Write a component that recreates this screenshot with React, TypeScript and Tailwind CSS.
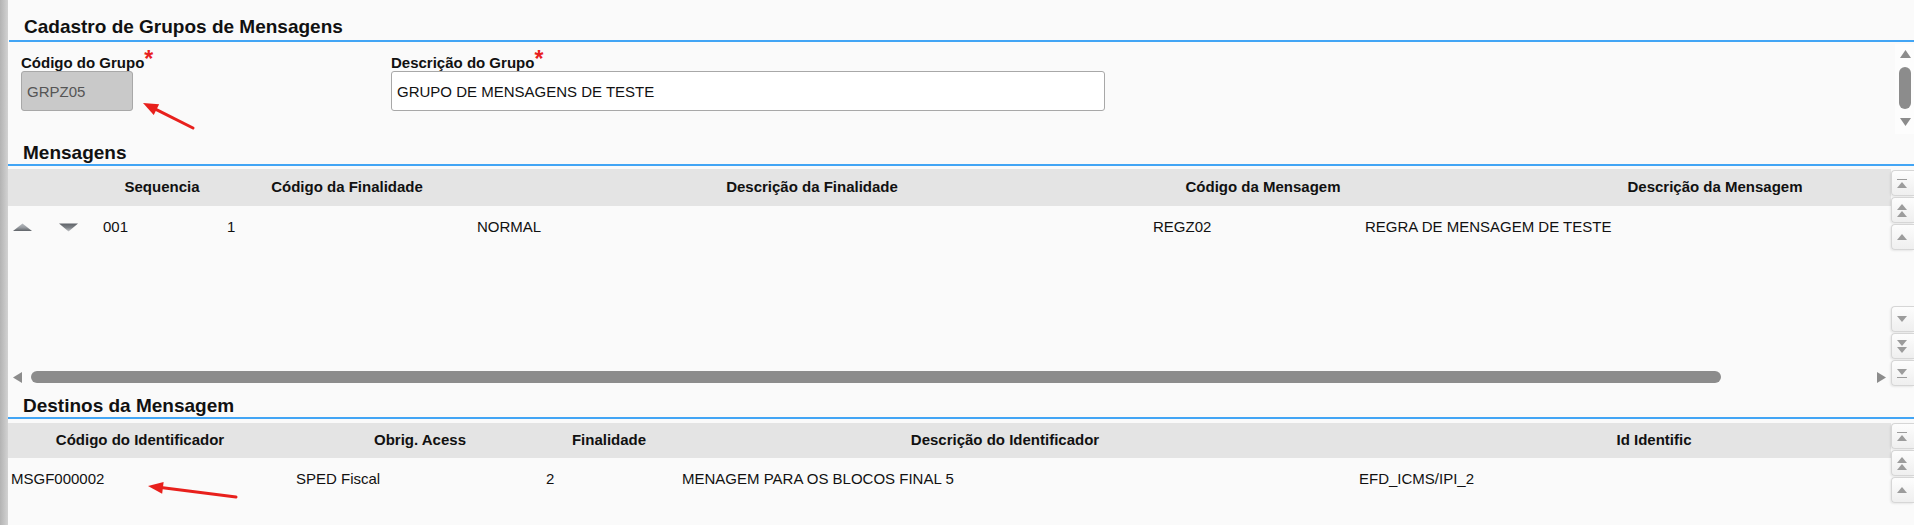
import React from 'react';

type Cell = { text: string };

const mensagensHeader = [
  'Sequencia',
  'Código da Finalidade',
  'Descrição da Finalidade',
  'Código da Mensagem',
  'Descrição da Mensagem',
];

const destinosHeader = [
  'Código do Identificador',
  'Obrig. Acess',
  'Finalidade',
  'Descrição do Identificador',
  'Id Identific',
];

const destinosRow: Cell[] = [
  { text: 'MSGF000002' },
  { text: 'SPED Fiscal' },
  { text: '2' },
  { text: 'MENAGEM PARA OS BLOCOS FINAL 5' },
  { text: 'EFD_ICMS/IPI_2' },
];

// small triangle used by the scroll controls
const Tri = ({ dir, w = 10, h = 7, color = '#9a9a9a' }: { dir: 'up' | 'down' | 'left' | 'right'; w?: number; h?: number; color?: string }) => {
  const pts =
    dir === 'up'
      ? `${w / 2},0 ${w},${h} 0,${h}`
      : dir === 'down'
      ? `0,0 ${w},0 ${w / 2},${h}`
      : dir === 'left'
      ? `${w},0 ${w},${h} 0,${h / 2}`
      : `0,0 ${w},${h / 2} 0,${h}`;
  return (
    <svg width={w} height={h} viewBox={`0 0 ${w} ${h}`} className="block">
      <polygon points={pts} fill={color} />
    </svg>
  );
};

type BtnKind = 'first' | 'prevPage' | 'prev' | 'next' | 'nextPage' | 'last';

const ScrollButton = ({ kind }: { kind: BtnKind }) => {
  let icon: React.ReactNode = null;
  if (kind === 'first') {
    icon = (
      <div className="flex flex-col items-center gap-[2px]">
        <div className="w-[10px] h-[1px] bg-[#9c9c9c]" />
        <Tri dir="up" w={10} h={6} color="#9c9c9c" />
      </div>
    );
  } else if (kind === 'prevPage') {
    icon = (
      <div className="flex flex-col items-center gap-[1px]">
        <Tri dir="up" w={10} h={6} color="#9c9c9c" />
        <Tri dir="up" w={10} h={6} color="#9c9c9c" />
      </div>
    );
  } else if (kind === 'prev') {
    icon = <Tri dir="up" w={10} h={6} color="#9c9c9c" />;
  } else if (kind === 'next') {
    icon = <Tri dir="down" w={10} h={6} color="#9c9c9c" />;
  } else if (kind === 'nextPage') {
    icon = (
      <div className="flex flex-col items-center gap-[1px]">
        <Tri dir="down" w={10} h={6} color="#9c9c9c" />
        <Tri dir="down" w={10} h={6} color="#9c9c9c" />
      </div>
    );
  } else {
    icon = (
      <div className="flex flex-col items-center gap-[2px]">
        <Tri dir="down" w={10} h={6} color="#9c9c9c" />
        <div className="w-[10px] h-[1px] bg-[#9c9c9c]" />
      </div>
    );
  }
  return (
    <div className="h-[26px] w-[23px] mb-[1px] rounded-l-[4px] border border-r-0 border-[#d6d6d6] bg-gradient-to-b from-[#fdfdfd] to-[#efefef] shadow-[-1px_1px_2px_rgba(0,0,0,0.08)] flex items-center justify-center pr-[2px]">
      {icon}
    </div>
  );
};

const SectionTitle = ({ title, className = '' }: { title: string; className?: string }) => (
  <div className={`border-b-2 border-[#42a5f5] pl-[15px] ${className}`}>
    <h2 className="text-[19px] leading-[22px] font-bold text-[#111]">{title}</h2>
  </div>
);

const Field = ({ label, value, disabled, width }: { label: string; value: string; disabled?: boolean; width: string }) => (
  <div className="flex flex-col">
    <label className="text-[15px] leading-[16px] font-bold text-[#111] whitespace-nowrap">
      {label}
      <span className="text-[#e8211e] text-[23px] font-bold leading-[0] align-[1px]">*</span>
    </label>
    <input
      readOnly
      value={value}
      className={`${width} h-[40px] rounded-[3px] border border-[#a8a8a8] px-[5px] text-[15px] outline-none ${
        disabled ? 'bg-[#c9c9c9] text-[#555]' : 'bg-white text-[#111]'
      }`}
    />
  </div>
);

const RowArrow = ({ dir }: { dir: 'up' | 'down' }) => (
  <svg width="19" height="9" viewBox="0 0 19 9" className="block">
    <defs>
      <linearGradient id={`ga-${dir}`} x1="0" y1="0" x2="0" y2="1">
        <stop offset="0" stopColor={dir === 'up' ? '#b7bbc0' : '#5f6368'} />
        <stop offset="0.5" stopColor={dir === 'up' ? '#9a9ea3' : '#7d8186'} />
        <stop offset="1" stopColor={dir === 'up' ? '#5f6368' : '#c4c6c9'} />
      </linearGradient>
    </defs>
    {dir === 'up' ? (
      <polygon points="9.5,0.5 19,8 0,8" fill={`url(#ga-${dir})`} />
    ) : (
      <polygon points="0,0.5 19,0.5 9.5,8.5" fill={`url(#ga-${dir})`} />
    )}
  </svg>
);

const RedArrow = ({ x1, y1, x2, y2 }: { x1: number; y1: number; x2: number; y2: number }) => {
  const ang = Math.atan2(y2 - y1, x2 - x1);
  const len = 15;
  const half = 6;
  const bx = x2 - len * Math.cos(ang);
  const by = y2 - len * Math.sin(ang);
  const px = -Math.sin(ang) * half;
  const py = Math.cos(ang) * half;
  return (
    <svg className="absolute inset-0 pointer-events-none" width="1914" height="525">
      <line x1={x1} y1={y1} x2={bx} y2={by} stroke="#e8201c" strokeWidth="3" strokeLinecap="round" />
      <polygon points={`${x2},${y2} ${bx + px},${by + py} ${bx - px},${by - py}`} fill="#e8201c" />
    </svg>
  );
};

export default function App() {
  return (
    <div className="relative w-[1914px] h-[525px] overflow-hidden bg-[#fafafa] flex font-['Liberation_Sans',Arial,sans-serif]">
      {/* left edge of the window */}
      <div className="w-[8px] h-full bg-gradient-to-r from-[#b3b3b3] to-[#d2d2d2]" />

      <div className="flex-1 min-w-0 flex flex-col">
        <SectionTitle title="Cadastro de Grupos de Mensagens" className="pt-[16px] pb-[2px] ml-[1px]" />

        {/* form */}
        <div className="h-[100px] flex justify-between">
          <div className="flex pl-[13px] pt-[13px]">
            <div className="w-[370px]">
              <Field label="Código do Grupo" value="GRPZ05" disabled width="w-[112px]" />
            </div>
            <Field label="Descrição do Grupo" value="GRUPO DE MENSAGENS DE TESTE" width="w-[714px]" />
          </div>
          <div className="w-[19px] mt-[2px] mb-[8px] bg-[#fdfdfd] flex flex-col items-center pt-[6px] pl-[1px]">
            <Tri dir="up" w={11} h={8} color="#8c8c8c" />
            <div className="mt-[9px] w-[12px] h-[42px] rounded-full bg-[#8c8c8c]" />
            <div className="mt-[9px]">
              <Tri dir="down" w={11} h={8} color="#8c8c8c" />
            </div>
          </div>
        </div>

        <SectionTitle title="Mensagens" />

        {/* Mensagens grid */}
        <div className="flex h-[223px]">
          <div className="flex-1 min-w-0 overflow-hidden flex flex-col pt-[3px]">
            <div className="h-[37px] bg-[#e4e4e4] grid grid-cols-[82px_144px_226px_704px_198px_706px] items-center text-[15px] font-bold text-[#111] whitespace-nowrap">
              <div />
              {mensagensHeader.map((h) => (
                <div key={h} className="text-center">
                  {h}
                </div>
              ))}
            </div>
            <div className="h-[42px] pl-[5px] grid grid-cols-[46px_44px_124px_250px_676px_212px_1fr] items-center text-[15px] text-[#111] whitespace-nowrap">
              <RowArrow dir="up" />
              <RowArrow dir="down" />
              <div>001</div>
              <div>1</div>
              <div>NORMAL</div>
              <div>REGZ02</div>
              <div>REGRA DE MENSAGEM DE TESTE</div>
            </div>
            <div className="flex-1" />
            {/* horizontal scroll */}
            <div className="h-[14px] mb-[5px] flex items-center pl-[5px] pr-[5px]">
              <Tri dir="left" w={9} h={11} color="#8c8c8c" />
              <div className="ml-[9px] w-[1690px] h-[12px] rounded-full bg-[#8c8c8c]" />
              <div className="flex-1" />
              <Tri dir="right" w={9} h={11} color="#8c8c8c" />
            </div>
          </div>
          <div className="w-[23px] flex flex-col pt-[4px] pb-[2px]">
            <ScrollButton kind="first" />
            <ScrollButton kind="prevPage" />
            <ScrollButton kind="prev" />
            <div className="flex-1" />
            <ScrollButton kind="next" />
            <ScrollButton kind="nextPage" />
            <ScrollButton kind="last" />
          </div>
        </div>

        <SectionTitle title="Destinos da Mensagem" className="mt-[6px]" />

        {/* Destinos grid */}
        <div className="flex flex-1">
          <div className="flex-1 min-w-0 overflow-hidden flex flex-col pt-[4px]">
            <div className="h-[35px] bg-[#e4e4e4] grid grid-cols-[264px_296px_82px_710px_588px] items-center text-[15px] font-bold text-[#111] whitespace-nowrap">
              {destinosHeader.map((h) => (
                <div key={h} className="text-center">
                  {h}
                </div>
              ))}
            </div>
            <div className="h-[42px] pl-[3px] grid grid-cols-[285px_250px_136px_677px_1fr] items-center text-[15px] text-[#111] whitespace-nowrap">
              {destinosRow.map((c) => (
                <div key={c.text}>{c.text}</div>
              ))}
            </div>
          </div>
          <div className="w-[23px] flex flex-col pt-[4px]">
            <ScrollButton kind="first" />
            <ScrollButton kind="prevPage" />
            <ScrollButton kind="prev" />
          </div>
        </div>
      </div>

      {/* annotation arrows */}
      <RedArrow x1={193} y1={128} x2={143} y2={103} />
      <RedArrow x1={236} y1={497} x2={148} y2={486} />
    </div>
  );
}
